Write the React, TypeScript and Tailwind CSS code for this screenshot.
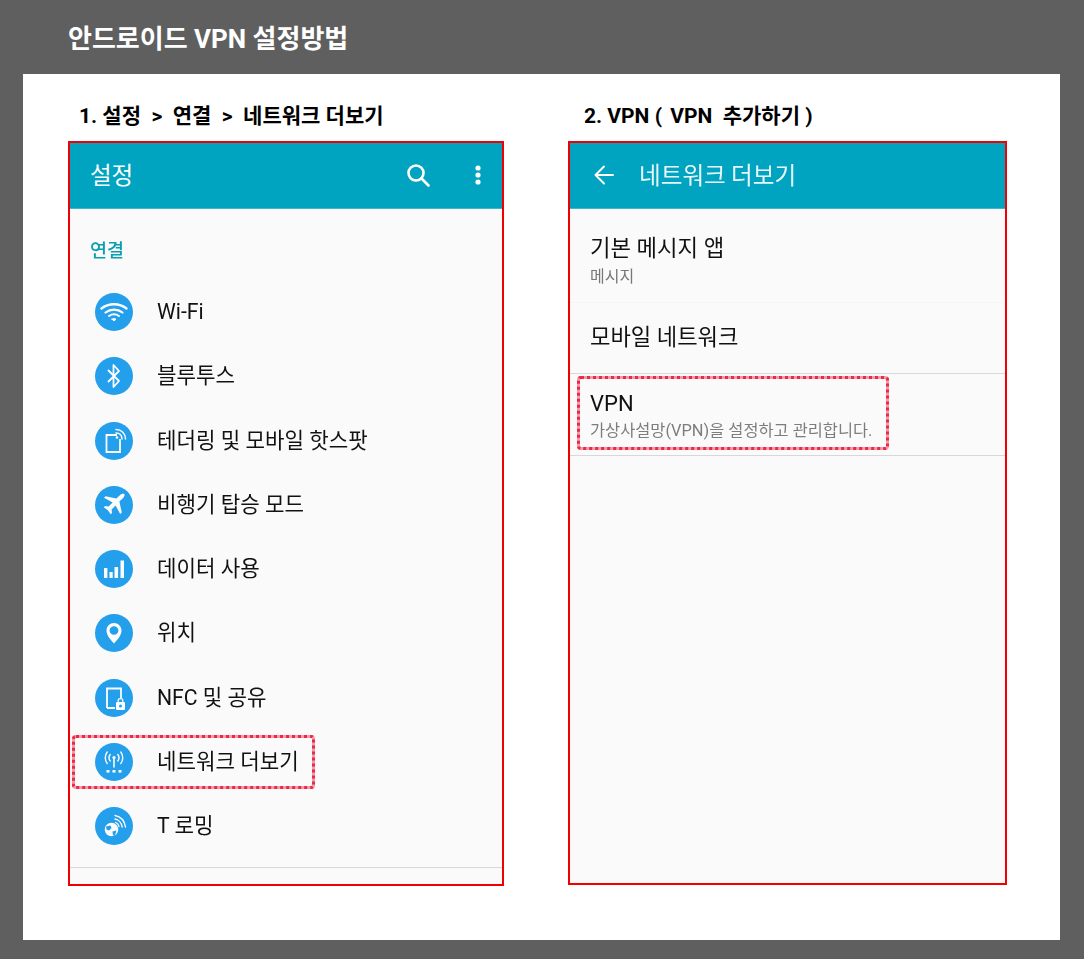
import React from "react";

const KO = { fontFamily: '"Noto Sans CJK KR", "Liberation Sans", sans-serif' };
const MIX = { fontFamily: 'Roboto, "Noto Sans CJK KR", sans-serif' };

const IconWrap = ({ children }: { children: React.ReactNode }) => (
  <div className="w-[38px] h-[38px] rounded-full bg-[#239fec] flex items-center justify-center shrink-0">
    <svg width="38" height="38" viewBox="0 0 38 38" fill="none" stroke="#fbfdff" strokeLinecap="round" strokeLinejoin="round">
      {children}
    </svg>
  </div>
);

const rows: { label: string; icon: React.ReactNode }[] = [
  {
    label: "Wi-Fi",
    icon: (
      <>
        <path d="M6.5 15.5C13.5 9.8 24.5 9.8 31.5 15.5" strokeWidth="2.4" />
        <path d="M10.5 19.5C15.5 15.6 22.5 15.6 27.5 19.5" strokeWidth="2.2" />
        <path d="M14 23C17 21 21 21 24 23" strokeWidth="2" />
        <path d="M17 26.2L19 28L21 26.2C19.8 25.4 18.2 25.4 17 26.2Z" fill="#fbfdff" strokeWidth="1" />
      </>
    ),
  },
  {
    label: "블루투스",
    icon: <path d="M13.5 13.5L24 24L18.5 30V8L24 14L13.5 24.5" strokeWidth="1.8" />,
  },
  {
    label: "테더링 및 모바일 핫스팟",
    icon: (
      <>
        <path d="M22 13H11.5V30H25V17" strokeWidth="1.8" strokeLinecap="butt" strokeLinejoin="miter" />
        <path d="M21 7.5C26.5 7.5 30.5 11.5 30.5 17" strokeWidth="1.5" />
        <path d="M21 11C24.6 11 27 13.4 27 17" strokeWidth="1.5" />
        <circle cx="22" cy="15.5" r="1.3" fill="#fbfdff" stroke="none" />
      </>
    ),
  },
  {
    label: "비행기 탑승 모드",
    icon: (
      <path
        d="M29.5 8.2C28 7.4 26 8 24.6 9.4L21.4 12.6L10.6 10.2L9 11.8L17.6 16.4L13.6 20.4L10 20L8.8 21.2L12.8 24.2L15.8 28.2L17 27L16.6 23.4L20.6 19.4L25.2 28L26.8 26.4L24.4 15.6L27.6 12.4C29 11 29.9 9.6 29.5 8.2Z"
        fill="#fbfdff"
        stroke="none"
      />
    ),
  },
  {
    label: "데이터 사용",
    icon: (
      <>
        <rect x="9" y="18" width="3.4" height="10" fill="#fbfdff" stroke="none" />
        <rect x="14.5" y="22" width="3.2" height="6" fill="#fbfdff" stroke="none" />
        <rect x="19.5" y="17" width="3.6" height="11" fill="#fbfdff" stroke="none" />
        <rect x="25.5" y="10.5" width="3.5" height="17.5" fill="#fbfdff" stroke="none" />
      </>
    ),
  },
  {
    label: "위치",
    icon: (
      <path
        d="M19 29.5C15.5 25.5 11.5 21.5 11.5 16.5C11.5 12.4 14.9 9 19 9C23.1 9 26.5 12.4 26.5 16.5C26.5 21.5 22.5 25.5 19 29.5ZM19 12.2C16.6 12.2 14.6 14.1 14.6 16.5C14.6 18.9 16.6 20.8 19 20.8C21.4 20.8 23.4 18.9 23.4 16.5C23.4 14.1 21.4 12.2 19 12.2Z"
        fill="#fbfdff"
        fillRule="evenodd"
        stroke="none"
      />
    ),
  },
  {
    label: "NFC 및 공유",
    icon: (
      <>
        <path d="M12 29V9.5H26V19M12 29H20" strokeWidth="1.8" strokeLinecap="butt" strokeLinejoin="miter" />
        <rect x="21" y="23" width="9" height="8" rx="1" fill="#fbfdff" stroke="none" />
        <path d="M23.2 23V21.5C23.2 19 27.8 19 27.8 21.5V23" strokeWidth="1.2" />
        <circle cx="25.5" cy="27" r="1.5" fill="#239fec" stroke="none" />
      </>
    ),
  },
  {
    label: "네트워크 더보기",
    icon: (
      <>
        <circle cx="19" cy="14.5" r="1.6" fill="#fbfdff" stroke="none" />
        <path d="M19 15V24" strokeWidth="1.6" />
        <path d="M15.2 11.5C13.7 13.4 13.7 16 15.2 18M22.8 11.5C24.3 13.4 24.3 16 22.8 18" strokeWidth="1.4" />
        <path d="M12.2 9C9.6 12.4 9.6 17.2 12.2 20.5M25.8 9C28.4 12.4 28.4 17.2 25.8 20.5" strokeWidth="1.4" />
        <rect x="11.5" y="27" width="3" height="2.6" fill="#fbfdff" stroke="none" />
        <rect x="17.5" y="27" width="3" height="2.6" fill="#fbfdff" stroke="none" />
        <rect x="23.5" y="27" width="3" height="2.6" fill="#fbfdff" stroke="none" />
      </>
    ),
  },
  {
    label: "T 로밍",
    icon: (
      <>
        <circle cx="16.5" cy="22.5" r="6.8" fill="#fbfdff" stroke="none" />
        <path d="M11 19.5L15.5 18.5L16.5 21L14 23.5L11.5 22.5ZM17.5 24.5L21.5 23.5L20 28.5L18 28.5Z" fill="#239fec" stroke="none" />
        <path d="M20 8.5C25.5 9.5 29.5 14 30.5 20" strokeWidth="1.4" />
        <path d="M20 12C23.5 12.6 26.6 15.8 27.2 20" strokeWidth="1.4" />
        <path d="M20.5 15.5C22 16 23.4 17.2 24 19.5" strokeWidth="1.3" />
      </>
    ),
  },
];

const Highlight = ({ className }: { className: string }) => (
  <div
    className={`absolute rounded-[4px] border-[3px] border-solid border-[#f79aa8] outline-[3px] outline-dotted outline-[#e92a47] -outline-offset-[3px] blur-[0.5px] ${className}`}
  />
);

export default function App() {
  return (
    <div className="w-[1084px] h-[959px] bg-[#5f5f5f] overflow-hidden flex flex-col px-[23px] pb-[19px]">
      <div className="h-[74px] shrink-0 pl-[45px] pt-[21px]">
        <h1 className="text-[26px] leading-[36px] font-bold text-white" style={MIX}>
          안드로이드 VPN 설정방법
        </h1>
      </div>
      <div className="w-[1037px] flex-1 bg-white flex pl-[45px] pt-[27px]">
        {/* left column */}
        <div className="w-[436px] flex flex-col">
          <div className="h-[40px] pl-[11px] text-[21px] leading-[30px] font-bold text-black whitespace-pre" style={MIX}>
            1. 설정  {">"}  연결  {">"}  네트워크 더보기
          </div>
          <div className="relative h-[745px] border-2 border-[#f00000] bg-[#fafafa]">
            <div className="h-full flex flex-col blur-[0.35px]">
              <div className="h-[66px] shrink-0 bg-[#00a3c0] flex items-center border-b border-b-[#3bb8cf] pl-[20px] pr-[21px]">
                <span className="flex-1 text-white text-[23.5px] leading-[30px] -mt-[4px]" style={KO}>설정</span>
                <svg width="26" height="26" viewBox="0 0 26 26" fill="none" stroke="#fff" strokeWidth="2.6" strokeLinecap="round" className="mr-[44px] -mt-[2px]">
                  <circle cx="11" cy="11" r="7.5" />
                  <path d="M16.5 16.5L23.5 23.5" />
                </svg>
                <svg width="6" height="20" viewBox="0 0 6 20" fill="#fff" className="-mt-[2px]">
                  <circle cx="3" cy="3" r="2.6" />
                  <circle cx="3" cy="10" r="2.6" />
                  <circle cx="3" cy="17" r="2.6" />
                </svg>
              </div>
              <div className="pl-[20px] pt-[26px] h-[71px] shrink-0 text-[#0b9fae] text-[18.5px] leading-[28px] font-medium" style={KO}>연결</div>
              <div className="flex flex-col">
                {rows.map((r) => (
                  <div key={r.label} className="h-[64.25px] flex items-center pl-[25px] gap-[24px] shrink-0">
                    <IconWrap>{r.icon}</IconWrap>
                    <span className="text-[21.2px] text-[#111] leading-[30px]" style={MIX}>{r.label}</span>
                  </div>
                ))}
              </div>
              <div className="mt-auto mb-[16px] border-t border-[#d8d8d8]" />
            </div>
            <Highlight className="left-[2px] top-[592px] w-[243px] h-[54px]" />
          </div>
        </div>
        {/* right column */}
        <div className="w-[439px] ml-[64px] flex flex-col">
          <div className="h-[40px] pl-[16px] text-[21px] leading-[30px] font-bold text-black whitespace-pre" style={MIX}>
            2. VPN ( <span className="ml-[3px]">VPN  추가하기 )</span>
          </div>
          <div className="relative h-[744px] border-2 border-[#f00000] bg-[#fafafa]">
            <div className="h-full flex flex-col blur-[0.35px]">
              <div className="h-[66px] shrink-0 bg-[#00a3c0] flex items-center border-b border-b-[#3bb8cf] pl-[24px]">
                <svg width="20" height="20" viewBox="0 0 20 20" fill="none" stroke="#fff" strokeWidth="2" strokeLinecap="round" strokeLinejoin="round" className="mr-[25px] -mt-[2px]">
                  <path d="M19 10H1.5M10 1.5L1.5 10L10 18.5" />
                </svg>
                <span className="text-[#e9f8fb] text-[23.6px] leading-[30px] -mt-[4px]" style={KO}>네트워크 더보기</span>
              </div>
              <div className="h-[93px] shrink-0 pl-[20px] pt-[22px]">
                <div className="text-[22.3px] leading-[34px] text-[#111]" style={MIX}>기본 메시지 앱</div>
                <div className="text-[16px] leading-[20px] mt-[2px] text-[#777]" style={MIX}>메시지</div>
              </div>
              <div className="h-[71px] shrink-0 pl-[20px] pt-[17px] border-t border-[#f5f5f5]">
                <div className="text-[22.2px] leading-[34px] text-[#111]" style={MIX}>모바일 네트워크</div>
              </div>
              <div className="h-[83px] shrink-0 pl-[20px] pt-[15px] border-t border-b border-[#d8d8d8]">
                <div className="text-[22px] leading-[30px] text-[#111]" style={MIX}>VPN</div>
                <div className="text-[16.4px] leading-[23px] text-[#7d7d7d]" style={MIX}>가상사설망(VPN)을 설정하고 관리합니다.</div>
              </div>
            </div>
            <Highlight className="left-[7px] top-[233px] w-[312px] h-[74px]" />
          </div>
        </div>
      </div>
    </div>
  );
}
